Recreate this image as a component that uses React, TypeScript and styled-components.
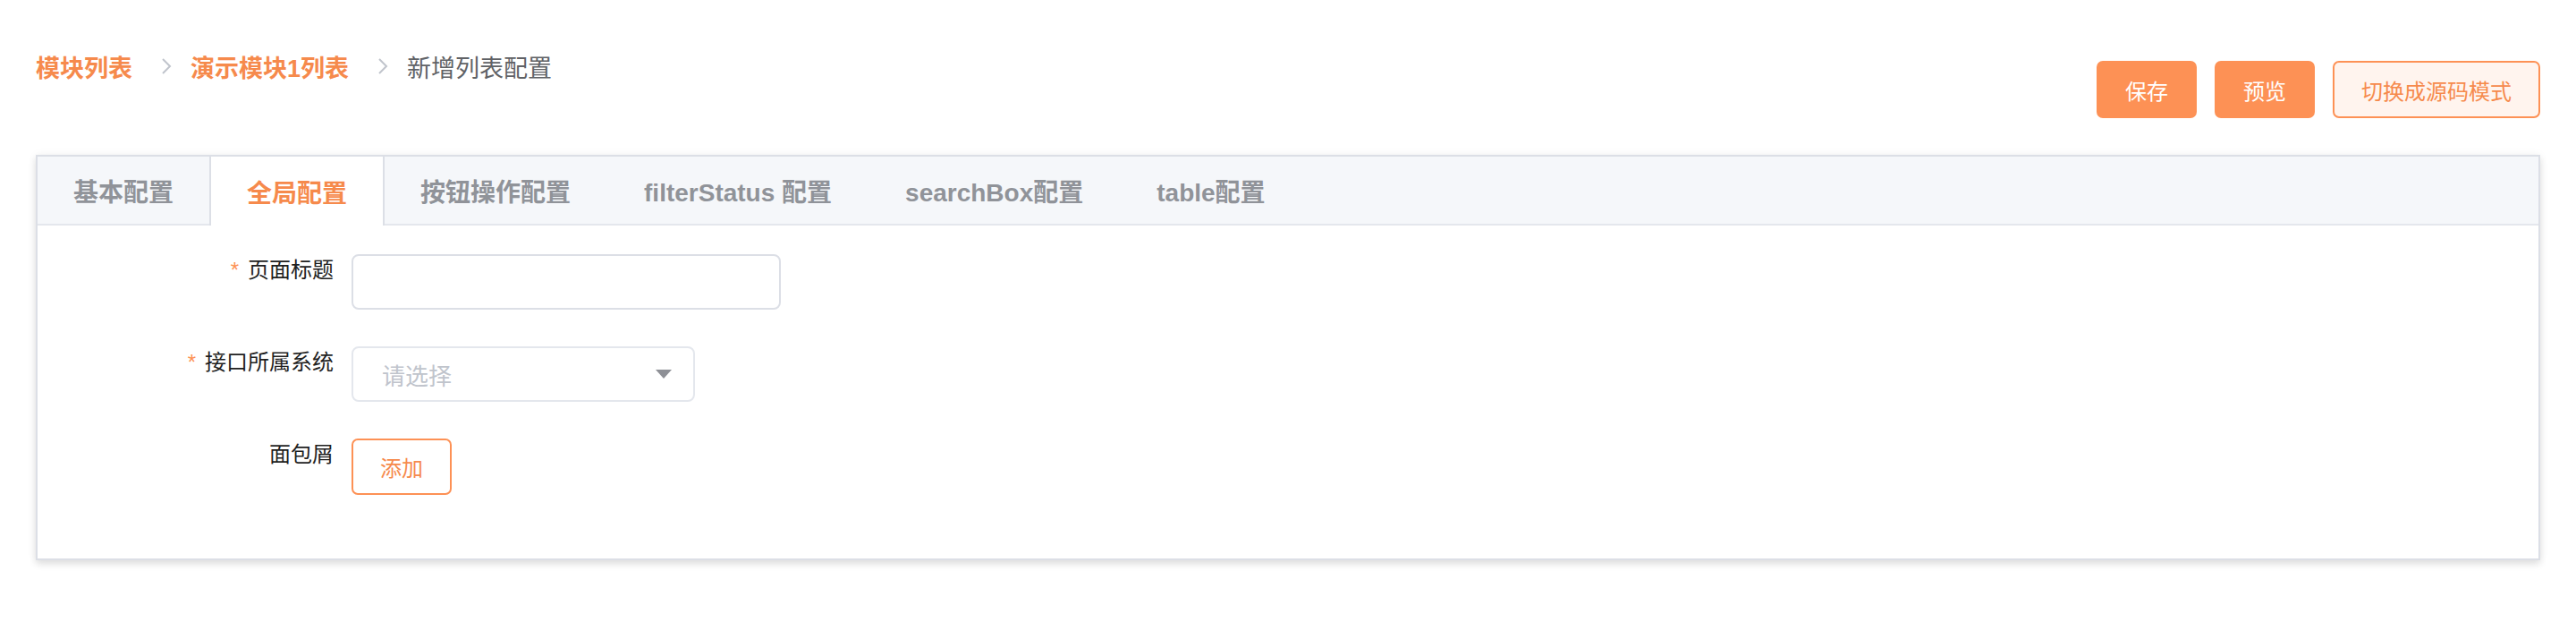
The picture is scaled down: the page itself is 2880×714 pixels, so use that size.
import { createGlobalStyle, styled } from "styled-components";

const primary = "#fd9155";
const primaryText = "#f68a4c";

const GlobalStyle = createGlobalStyle`
  body {
    margin: 0;
    background: #ffffff;
    font-family: "Liberation Sans", "Noto Sans CJK SC", sans-serif;
  }
`;

const tabs = [
  "基本配置",
  "全局配置",
  "按钮操作配置",
  "filterStatus 配置",
  "searchBox配置",
  "table配置",
];

const Chevron = () => (
  <svg width="12" height="20" viewBox="0 0 12 20">
    <polyline
      points="2,2 10,10 2,18"
      fill="none"
      stroke="#c0c4cc"
      strokeWidth="2"
    />
  </svg>
);

const Caret = () => (
  <svg width="18" height="10" viewBox="0 0 18 10">
    <polygon points="0,0 18,0 9,10" fill="#8e9096" />
  </svg>
);

export default function App() {
  return (
    <>
      <GlobalStyle />
      <Page>
        <Header>
          <Breadcrumb>
            <Crumb $link>模块列表</Crumb>
            <Separator>
              <Chevron />
            </Separator>
            <Crumb $link>演示模块1列表</Crumb>
            <Separator>
              <Chevron />
            </Separator>
            <Crumb>新增列表配置</Crumb>
          </Breadcrumb>
          <Actions>
            <Button $solid>保存</Button>
            <Button $solid>预览</Button>
            <Button>切换成源码模式</Button>
          </Actions>
        </Header>

        <Panel>
          <TabBar>
            {tabs.map((t, i) => (
              <Tab key={t} $active={i === 1}>
                {t}
              </Tab>
            ))}
          </TabBar>
          <Content>
            <FormRow>
              <Label>
                <Required>*</Required>页面标题
              </Label>
              <TextInput />
            </FormRow>
            <FormRow>
              <Label>
                <Required>*</Required>接口所属系统
              </Label>
              <Select>
                <Placeholder>请选择</Placeholder>
                <Caret />
              </Select>
            </FormRow>
            <FormRow>
              <Label>面包屑</Label>
              <AddButton>添加</AddButton>
            </FormRow>
          </Content>
        </Panel>
      </Page>
    </>
  );
}

const Page = styled.div`
  padding: 0 40px 40px;
`;

const Header = styled.div`
  display: flex;
  justify-content: space-between;
  align-items: flex-start;
`;

const Breadcrumb = styled.div`
  display: flex;
  align-items: center;
  margin-top: 54px;
  height: 40px;
  font-size: 27px;
`;

const Crumb = styled.span<{ $link?: boolean }>`
  color: ${(p) => (p.$link ? primaryText : "#606266")};
  font-weight: ${(p) => (p.$link ? 700 : 400)};
  white-space: nowrap;
`;

const Separator = styled.span`
  display: flex;
  align-items: center;
  margin: 0 21px 0 32px;
`;

const Actions = styled.div`
  display: flex;
  gap: 20px;
  margin-top: 68px;
`;

const Button = styled.div<{ $solid?: boolean }>`
  height: 64px;
  box-sizing: border-box;
  padding: 0 30px;
  display: flex;
  align-items: center;
  justify-content: center;
  font-size: 24px;
  border-radius: 7px;
  border: 2px solid ${primary};
  background: ${(p) => (p.$solid ? primary : "#fff4ee")};
  color: ${(p) => (p.$solid ? "#ffffff" : primaryText)};
  white-space: nowrap;
`;

const Panel = styled.div`
  margin-top: 41px;
  border: 2px solid #dcdfe6;
  background: #ffffff;
  box-shadow: 0 4px 8px 0 rgba(0, 0, 0, 0.12), 0 0 12px 0 rgba(0, 0, 0, 0.04);
`;

const TabBar = styled.div`
  display: flex;
  height: 75px;
  background: #f5f7fa;
  border-bottom: 2px solid #e4e7ed;
`;

const Tab = styled.div<{ $active?: boolean }>`
  display: flex;
  align-items: center;
  padding: 0 40px;
  margin-left: -2px;
  margin-bottom: ${(p) => (p.$active ? "-2px" : "0")};
  font-size: 28px;
  font-weight: 700;
  white-space: nowrap;
  color: ${(p) => (p.$active ? primaryText : "#909399")};
  background: ${(p) => (p.$active ? "#ffffff" : "transparent")};
  border-left: 2px solid ${(p) => (p.$active ? "#dcdfe6" : "transparent")};
  border-right: 2px solid ${(p) => (p.$active ? "#dcdfe6" : "transparent")};
`;

const Content = styled.div`
  padding: 32px 30px 30px;
`;

const FormRow = styled.div`
  display: flex;
  align-items: flex-start;
  margin-bottom: 41px;
`;

const Label = styled.div`
  width: 301px;
  flex: none;
  padding-right: 20px;
  text-align: right;
  font-size: 24px;
  line-height: 36px;
  color: #1f1f1f;
`;

const Required = styled.span`
  color: ${primary};
  margin-right: 10px;
`;

const TextInput = styled.div`
  width: 480px;
  height: 62px;
  box-sizing: border-box;
  border: 2px solid #dcdfe6;
  border-radius: 8px;
  background: #ffffff;
`;

const Select = styled.div`
  width: 384px;
  height: 62px;
  box-sizing: border-box;
  border: 2px solid #e4e7ed;
  border-radius: 8px;
  padding: 0 24px 0 32px;
  display: flex;
  align-items: center;
  justify-content: space-between;
`;

const Placeholder = styled.span`
  font-size: 26px;
  color: #c0c4cc;
`;

const AddButton = styled.div`
  width: 112px;
  height: 63px;
  box-sizing: border-box;
  border: 2px solid ${primary};
  border-radius: 7px;
  display: flex;
  align-items: center;
  justify-content: center;
  font-size: 24px;
  color: ${primaryText};
  background: #ffffff;
`;
